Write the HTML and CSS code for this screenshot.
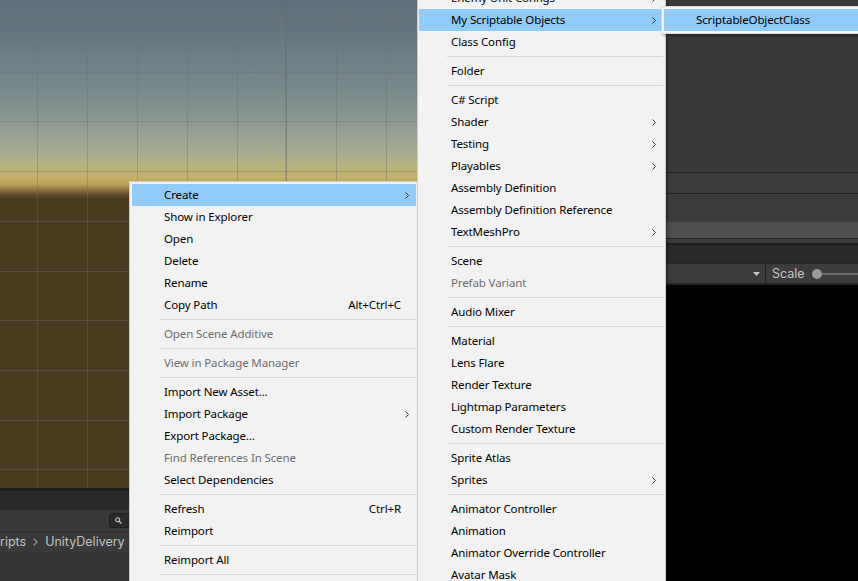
FILE: index.html
```html
<!DOCTYPE html>
<html lang="en">
<head>
<meta charset="utf-8">
<title>Unity – Create menu</title>
<link rel="stylesheet" href="styles.css">
</head>
<body>
<div class="editor">
  <div class="left-col">
    <div class="scene-view"></div>
    <div class="project">
      <div class="dock-edge"></div>
      <div class="tab-strip"></div>
      <div class="project-toolbar">
        <div class="search-field">
          <svg class="search-icon" width="7" height="7" viewBox="0 0 7 7"><circle cx="2.7" cy="2.7" r="2" fill="none" stroke="#c4c4c4" stroke-width="1.1"/><path d="M4.2 4.2 L6.5 6.5" stroke="#c4c4c4" stroke-width="1.3"/></svg>
        </div>
      </div>
      <div class="breadcrumbs">
        <span class="crumb">ripts</span>
        <svg class="crumb-sep" width="5" height="8" viewBox="0 0 5 8"><path d="M0.7 0.7 L4 4 L0.7 7.3" fill="none" stroke="#9a9a9a" stroke-width="1.2"/></svg>
        <span class="crumb">UnityDelivery</span>
        <svg class="crumb-sep" width="5" height="8" viewBox="0 0 5 8"><path d="M0.7 0.7 L4 4 L0.7 7.3" fill="none" stroke="#9a9a9a" stroke-width="1.2"/></svg>
      </div>
      <div class="project-body"></div>
    </div>
  </div>
  <div class="right-col">
    <div class="panel-top"></div>
    <div class="panel-row row-a"></div>
    <div class="panel-row row-b"></div>
    <div class="panel-row row-c"></div>
    <div class="panel-row row-d"></div>
    <div class="dock-edge thin"></div>
    <div class="tab-strip game-tabs"></div>
    <div class="game-toolbar">
      <div class="toolbar-fill">
        <svg class="dropdown" width="7" height="4" viewBox="0 0 7 4"><path d="M0 0 H7 L3.5 4 Z" fill="#c4c4c4"/></svg>
      </div>
      <div class="scale-control">
        <span class="scale-label">Scale</span>
        <span class="slider"><span class="knob"></span><span class="track"></span></span>
      </div>
    </div>
    <div class="game-view"></div>
  </div>
</div>

<div class="menu menu-create">
  <div class="item active"><span class="label">Create</span><span class="arrow-slot"><svg class="chev" width="4" height="7" viewBox="0 0 4 7"><path d="M0.5 0.5 L3.5 3.5 L0.5 6.5" fill="none" stroke="#333" stroke-width="1"/></svg></span></div>
  <div class="item"><span class="label">Show in Explorer</span><span class="arrow-slot"></span></div>
  <div class="item"><span class="label">Open</span><span class="arrow-slot"></span></div>
  <div class="item"><span class="label">Delete</span><span class="arrow-slot"></span></div>
  <div class="item"><span class="label">Rename</span><span class="arrow-slot"></span></div>
  <div class="item"><span class="label">Copy Path</span><span class="shortcut">Alt+Ctrl+C</span><span class="arrow-slot"></span></div>
  <div class="sep"></div>
  <div class="item disabled"><span class="label">Open Scene Additive</span><span class="arrow-slot"></span></div>
  <div class="sep"></div>
  <div class="item disabled"><span class="label">View in Package Manager</span><span class="arrow-slot"></span></div>
  <div class="sep"></div>
  <div class="item"><span class="label">Import New Asset...</span><span class="arrow-slot"></span></div>
  <div class="item"><span class="label">Import Package</span><span class="arrow-slot"><svg class="chev" width="4" height="7" viewBox="0 0 4 7"><path d="M0.5 0.5 L3.5 3.5 L0.5 6.5" fill="none" stroke="#333" stroke-width="1"/></svg></span></div>
  <div class="item"><span class="label">Export Package...</span><span class="arrow-slot"></span></div>
  <div class="item disabled"><span class="label">Find References In Scene</span><span class="arrow-slot"></span></div>
  <div class="item"><span class="label">Select Dependencies</span><span class="arrow-slot"></span></div>
  <div class="sep"></div>
  <div class="item"><span class="label">Refresh</span><span class="shortcut">Ctrl+R</span><span class="arrow-slot"></span></div>
  <div class="item"><span class="label">Reimport</span><span class="arrow-slot"></span></div>
  <div class="sep"></div>
  <div class="item"><span class="label">Reimport All</span><span class="arrow-slot"></span></div>
  <div class="sep"></div>
  <div class="menu-tail"></div>
</div>

<div class="menu menu-middle">
  <div class="item"><span class="label">Enemy Unit Configs</span><span class="arrow-slot"><svg class="chev" width="4" height="7" viewBox="0 0 4 7"><path d="M0.5 0.5 L3.5 3.5 L0.5 6.5" fill="none" stroke="#333" stroke-width="1"/></svg></span></div>
  <div class="item active"><span class="label">My Scriptable Objects</span><span class="arrow-slot"><svg class="chev" width="4" height="7" viewBox="0 0 4 7"><path d="M0.5 0.5 L3.5 3.5 L0.5 6.5" fill="none" stroke="#333" stroke-width="1"/></svg></span></div>
  <div class="item"><span class="label">Class Config</span><span class="arrow-slot"></span></div>
  <div class="sep"></div>
  <div class="item"><span class="label">Folder</span><span class="arrow-slot"></span></div>
  <div class="sep"></div>
  <div class="item"><span class="label">C# Script</span><span class="arrow-slot"></span></div>
  <div class="item"><span class="label">Shader</span><span class="arrow-slot"><svg class="chev" width="4" height="7" viewBox="0 0 4 7"><path d="M0.5 0.5 L3.5 3.5 L0.5 6.5" fill="none" stroke="#333" stroke-width="1"/></svg></span></div>
  <div class="item"><span class="label">Testing</span><span class="arrow-slot"><svg class="chev" width="4" height="7" viewBox="0 0 4 7"><path d="M0.5 0.5 L3.5 3.5 L0.5 6.5" fill="none" stroke="#333" stroke-width="1"/></svg></span></div>
  <div class="item"><span class="label">Playables</span><span class="arrow-slot"><svg class="chev" width="4" height="7" viewBox="0 0 4 7"><path d="M0.5 0.5 L3.5 3.5 L0.5 6.5" fill="none" stroke="#333" stroke-width="1"/></svg></span></div>
  <div class="item"><span class="label">Assembly Definition</span><span class="arrow-slot"></span></div>
  <div class="item"><span class="label">Assembly Definition Reference</span><span class="arrow-slot"></span></div>
  <div class="item"><span class="label">TextMeshPro</span><span class="arrow-slot"><svg class="chev" width="4" height="7" viewBox="0 0 4 7"><path d="M0.5 0.5 L3.5 3.5 L0.5 6.5" fill="none" stroke="#333" stroke-width="1"/></svg></span></div>
  <div class="sep"></div>
  <div class="item"><span class="label">Scene</span><span class="arrow-slot"></span></div>
  <div class="item disabled"><span class="label">Prefab Variant</span><span class="arrow-slot"></span></div>
  <div class="sep"></div>
  <div class="item"><span class="label">Audio Mixer</span><span class="arrow-slot"></span></div>
  <div class="sep"></div>
  <div class="item"><span class="label">Material</span><span class="arrow-slot"></span></div>
  <div class="item"><span class="label">Lens Flare</span><span class="arrow-slot"></span></div>
  <div class="item"><span class="label">Render Texture</span><span class="arrow-slot"></span></div>
  <div class="item"><span class="label">Lightmap Parameters</span><span class="arrow-slot"></span></div>
  <div class="item"><span class="label">Custom Render Texture</span><span class="arrow-slot"></span></div>
  <div class="sep"></div>
  <div class="item"><span class="label">Sprite Atlas</span><span class="arrow-slot"></span></div>
  <div class="item"><span class="label">Sprites</span><span class="arrow-slot"><svg class="chev" width="4" height="7" viewBox="0 0 4 7"><path d="M0.5 0.5 L3.5 3.5 L0.5 6.5" fill="none" stroke="#333" stroke-width="1"/></svg></span></div>
  <div class="sep"></div>
  <div class="item"><span class="label">Animator Controller</span><span class="arrow-slot"></span></div>
  <div class="item"><span class="label">Animation</span><span class="arrow-slot"></span></div>
  <div class="item"><span class="label">Animator Override Controller</span><span class="arrow-slot"></span></div>
  <div class="item"><span class="label">Avatar Mask</span><span class="arrow-slot"></span></div>
</div>

<div class="menu menu-sub">
  <div class="item active"><span class="label">ScriptableObjectClass</span></div>
</div>
</body>
</html>
```

FILE: styles.css
```css
html, body {
  margin: 0;
  padding: 0;
  width: 858px;
  height: 581px;
  overflow: hidden;
}

body {
  position: relative;
  background: #000;
  font-family: "Noto Sans", "Open Sans", sans-serif;
}

.editor {
  display: flex;
  width: 858px;
  height: 581px;
}

/* ---------- left column: scene + project ---------- */
.left-col {
  width: 420px;
  flex: none;
  display: flex;
  flex-direction: column;
}

.scene-view {
  height: 488px;
  flex: none;
  background:
    linear-gradient(to right, transparent 285px, rgba(100, 100, 100, 0.3) 285px, rgba(100, 100, 100, 0.3) 287px, transparent 287px),
    repeating-linear-gradient(to right, transparent 0, transparent 37px, rgba(110, 110, 110, 0.38) 37px, rgba(110, 110, 110, 0.38) 38px, transparent 38px, transparent 49.9px),
    repeating-linear-gradient(to bottom, transparent 0, transparent 22px, rgba(110, 110, 110, 0.38) 22px, rgba(110, 110, 110, 0.38) 23px, transparent 23px, transparent 49.7px),
    linear-gradient(to bottom,
      #5d6d79 0px,
      #677883 40px,
      #788a8c 90px,
      #8a9890 120px,
      #a2aa92 148px,
      #b6b380 166px,
      #c5b06a 177px,
      #bca257 184px,
      #8c7442 190px,
      #5a4828 195px,
      #4a3b21 199px,
      #4a3b21 100%);
}

.project {
  flex: 1;
  display: flex;
  flex-direction: column;
  background: #333333;
}

.dock-edge {
  height: 3px;
  flex: none;
  background: #1c1c1c;
}

.dock-edge.thin {
  height: 2px;
}

.tab-strip {
  height: 19px;
  flex: none;
  background: #282828;
}

.project-toolbar {
  height: 21px;
  flex: none;
  background: #393939;
  border-bottom: 1px solid #2f2f2f;
  display: flex;
  align-items: flex-start;
}

.search-field {
  margin: 3px 0 0 109px;
  width: 140px;
  height: 13px;
  background: #2a2a2a;
  border: 1px solid #1f1f1f;
  border-radius: 3px;
  display: flex;
  align-items: center;
  padding-left: 5px;
}

.search-icon {
  display: block;
}

.breadcrumbs {
  height: 20px;
  flex: none;
  background: #393939;
  display: flex;
  align-items: center;
  gap: 7px;
  font-family: Inter, "Noto Sans", sans-serif;
  font-size: 12.5px;
  color: #c2c2c2;
}

.crumb {
  line-height: 20px;
}

.crumb-sep {
  display: block;
}

.project-body {
  flex: 1;
  background: #333333;
}

/* ---------- right column: inspector / game view ---------- */
.right-col {
  flex: 1;
  display: flex;
  flex-direction: column;
  background: #3c3c3c;
}

.panel-top {
  height: 172px;
  flex: none;
  background: #393939;
  border-bottom: 1px solid #232323;
}

.panel-row {
  flex: none;
  background: #3c3c3c;
}

.row-a {
  height: 20px;
  border-bottom: 1px solid #232323;
}

.row-b {
  height: 28px;
}

.row-c {
  height: 16px;
  background: #4f4f4f;
  border-bottom: 1px solid #232323;
}

.row-d {
  height: 4px;
}

.game-tabs {
  height: 18px;
  border-bottom: 1px solid #232323;
}

.game-toolbar {
  height: 19px;
  flex: none;
  background: #3c3c3c;
  border-bottom: 2px solid #232323;
  display: flex;
  align-items: stretch;
}

.toolbar-fill {
  width: 345px;
  flex: none;
  display: flex;
  align-items: center;
  justify-content: flex-end;
  padding-right: 5px;
  box-sizing: border-box;
}

.dropdown {
  display: block;
  margin-top: 1px;
}

.scale-control {
  flex: 1;
  border-left: 1px solid #232323;
  display: flex;
  align-items: center;
  padding-left: 6px;
  font-family: Inter, "Noto Sans", sans-serif;
  font-size: 12.5px;
  color: #c4c4c4;
}

.slider {
  flex: 1;
  display: flex;
  align-items: center;
  margin-left: 7px;
}

.knob {
  width: 10px;
  height: 10px;
  border-radius: 50%;
  background: #999999;
  flex: none;
}

.track {
  flex: 1;
  height: 2px;
  background: #6a6a6a;
}

.game-view {
  flex: 1;
  background: #000;
}

/* ---------- context menus ---------- */
.menu {
  position: absolute;
  background: #f2f2f2;
  border: 1px solid #cccccc;
  box-shadow: 2px 2px 3px rgba(0, 0, 0, 0.3);
  font-family: "Noto Sans", "Open Sans", sans-serif;
  font-size: 11.5px;
  letter-spacing: -0.12px;
  color: #000;
}

.menu-create {
  left: 129px;
  top: 181px;
  width: 284px;
  padding: 2px 1px 2px 2px;
  z-index: 1;
}

.menu-tail {
  height: 22px;
}

.menu-middle {
  left: 417px;
  top: -16px;
  width: 244px;
  padding: 2px 2px 2px 1px;
  z-index: 2;
}

.menu-sub {
  left: 661px;
  top: 6px;
  width: 220px;
  padding: 2px 0 2px 2px;
  z-index: 3;
  border-color: #dcdcdc;
}

.item {
  box-sizing: border-box;
  display: flex;
  align-items: center;
  height: 22px;
  padding: 0 7px 2px 32px;
  white-space: nowrap;
}

.item.active {
  background: #91c9f7;
}

.item.disabled {
  color: #6d6d6d;
}

.label {
  flex: 1;
}

.shortcut {
  flex: none;
}

.arrow-slot {
  width: 8px;
  flex: none;
  display: flex;
  justify-content: flex-end;
  margin-bottom: -2px;
}

.chev {
  display: block;
}

.sep {
  height: 1px;
  margin: 3px 0 3px 28px;
  background: #d7d7d7;
}
```
